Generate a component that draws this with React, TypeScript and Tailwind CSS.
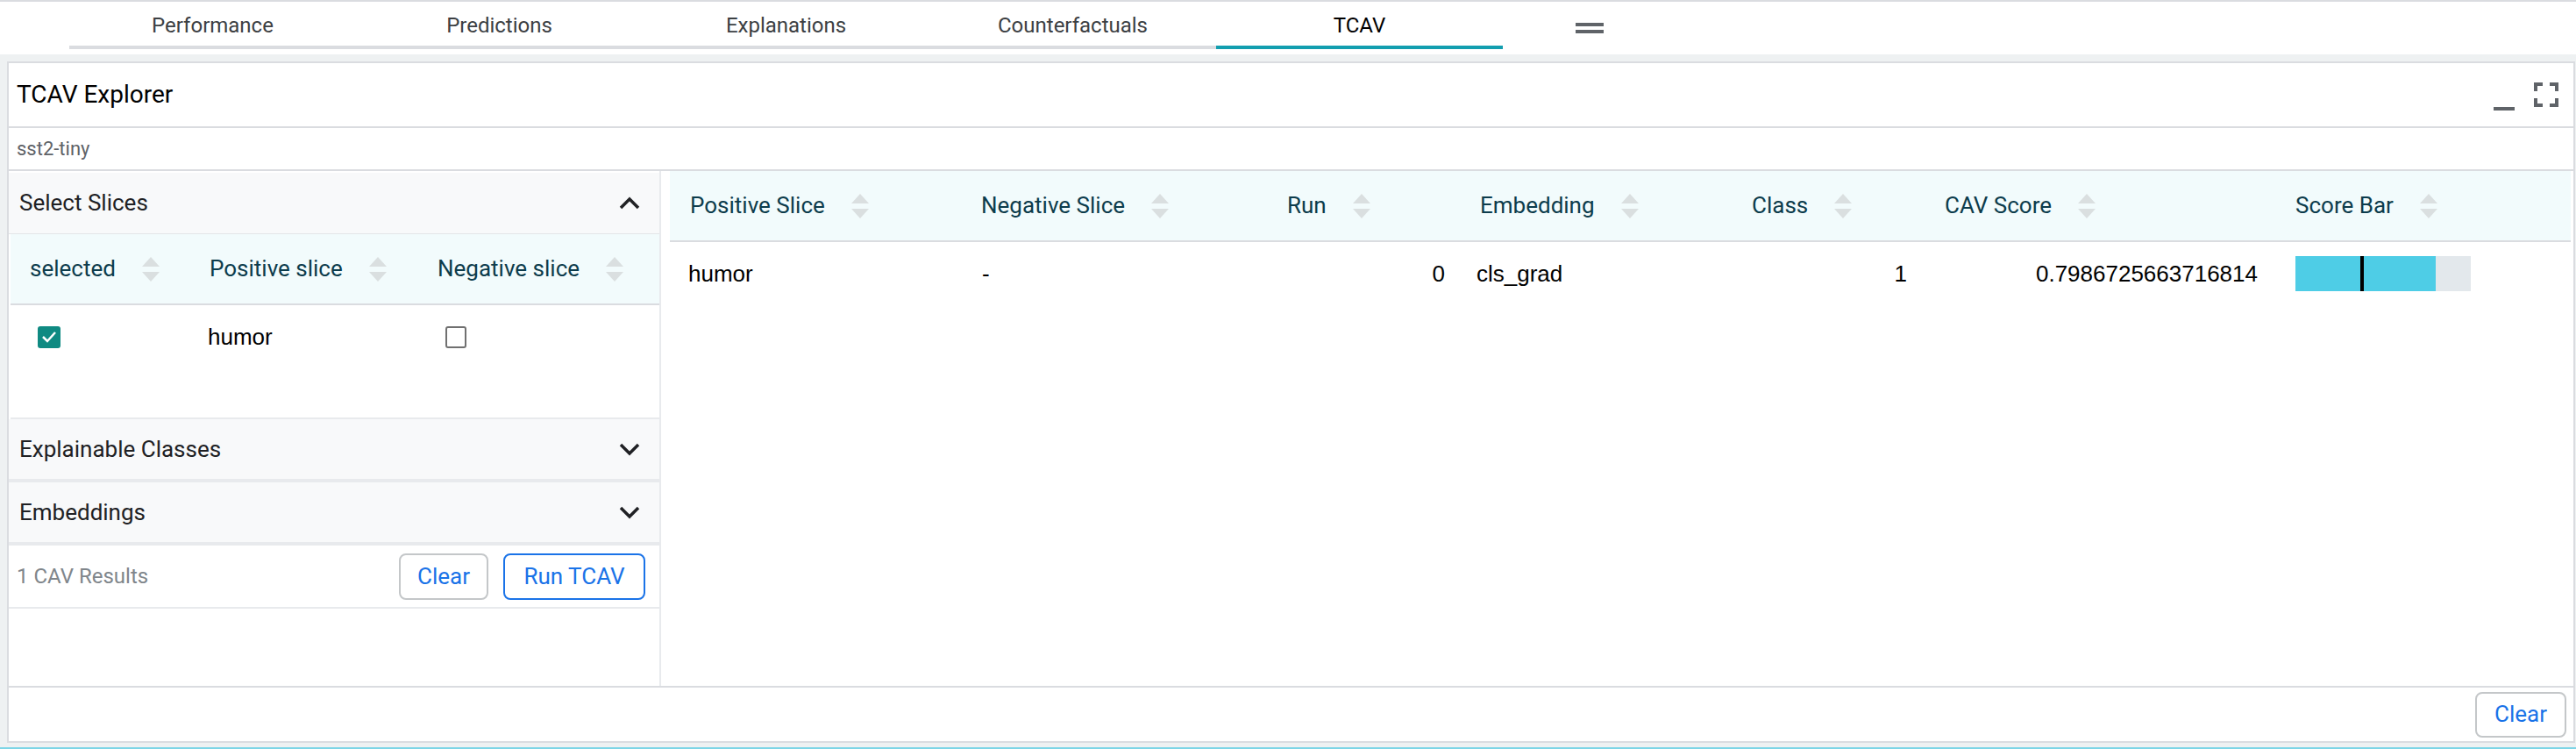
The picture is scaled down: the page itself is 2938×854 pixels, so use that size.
import React from "react";

const TABS = ["Performance", "Predictions", "Explanations", "Counterfactuals", "TCAV"];

function SortArrows() {
  return (
    <svg width="20" height="28" viewBox="0 0 20 28" className="shrink-0">
      <path d="M10 0 L20 11 L0 11 Z" fill="#dadfe0" />
      <path d="M0 17 L20 17 L10 28 Z" fill="#dadfe0" />
    </svg>
  );
}

function Chevron({ up }: { up?: boolean }) {
  return (
    <svg width="24" height="15" viewBox="0 0 24 15">
      <path
        d={up ? "M2 13 L12 3 L22 13" : "M2 2 L12 12 L22 2"}
        stroke="#202124"
        strokeWidth="3.5"
        fill="none"
      />
    </svg>
  );
}

function HeadCell({ label, className }: { label: string; className: string }) {
  return (
    <div className={`flex items-center gap-[30px] pl-[23px] ${className}`}>
      <span>{label}</span>
      <SortArrows />
    </div>
  );
}

function Section({ title, up }: { title: string; up?: boolean }) {
  return (
    <div className="h-full bg-[#f8f9fa] flex items-center justify-between pl-[12px] pr-[22px] text-[26px] text-[#202124]">
      <span>{title}</span>
      <Chevron up={up} />
    </div>
  );
}

export default function App() {
  return (
    <div className="w-[2938px] h-[854px] bg-[#eef1f2] flex flex-col overflow-hidden font-['Roboto',sans-serif]">
      {/* tab bar */}
      <div className="h-[62px] bg-white border-t-2 border-[#dadce0] flex pl-[79px]">
        {TABS.map((t) => (
          <div
            key={t}
            className={`w-[327px] h-[54px] flex items-center justify-center pt-[4px] text-[24px] border-b-4 ${
              t === "TCAV" ? "border-[#129eaf] text-[#000]" : "border-[#dadce0] text-[#3c4043]"
            }`}
          >
            {t}
          </div>
        ))}
        <div className="h-[54px] flex flex-col justify-center gap-[4px] pt-[6px] ml-[83px]">
          <div className="w-[32px] h-[4px] bg-[#5f6368]" />
          <div className="w-[32px] h-[4px] bg-[#5f6368]" />
        </div>
      </div>

      {/* module panel */}
      <div className="mt-[8px] ml-[8px] w-[2929px] h-[777px] border-2 border-[#dadce0] bg-white flex flex-col">
        <div className="h-[74px] border-b-2 border-[#dadce0] flex items-center justify-between pl-[9px] pr-[17px]">
          <span className="text-[28px] text-[#000]">TCAV Explorer</span>
          <div className="flex items-center gap-[22px]">
            <div className="w-[24px] h-[4px] bg-[#5f6368] mt-[32px]" />
            <svg width="28" height="28" viewBox="0 0 28 28">
              <path d="M0 0 H10 V4 H4 V10 H0 Z" fill="#5f6368" />
              <path d="M28 0 H18 V4 H24 V10 H28 Z" fill="#5f6368" />
              <path d="M0 28 H10 V24 H4 V18 H0 Z" fill="#5f6368" />
              <path d="M28 28 H18 V24 H24 V18 H28 Z" fill="#5f6368" />
            </svg>
          </div>
        </div>
        <div className="h-[49px] border-b-2 border-[#dadce0] flex items-center pl-[9px] text-[22px] text-[#5f6368]">
          sst2-tiny
        </div>

        {/* body */}
        <div className="h-[589px] border-b-2 border-[#dadce0] flex">
          {/* left controls */}
          <div className="w-[744px] border-r-2 border-[#e8eaed] flex flex-col pt-[2px]">
            <div className="h-[70px] border-b border-[#e3e6e8]">
              <Section title="Select Slices" up />
            </div>
            <div className="h-[81px] ml-[2px] bg-[#f2fbfc] border-b-2 border-[#dadce0] flex text-[26px] text-[#0d3c4c]">
              <div className="w-[205px] flex items-center gap-[30px] pl-[22px]">
                <span>selected</span>
                <SortArrows />
              </div>
              <div className="w-[260px] flex items-center gap-[30px] pl-[22px]">
                <span>Positive slice</span>
                <SortArrows />
              </div>
              <div className="flex-1 flex items-center gap-[30px] pl-[22px]">
                <span>Negative slice</span>
                <SortArrows />
              </div>
            </div>
            <div className="h-[130px] ml-[2px] border-b-2 border-[#e8eaed]">
              <div className="h-[72px] flex items-center text-[26px] text-[#000] font-['Liberation_Sans',sans-serif]">
                <div className="w-[205px] pl-[31px]">
                  <div className="w-[26px] h-[25px] rounded-[3px] bg-[#0f8a82] flex items-center justify-center">
                    <svg width="18" height="14" viewBox="0 0 18 14">
                      <path d="M2 7 L7 12 L16 2" stroke="#fff" strokeWidth="2.5" fill="none" />
                    </svg>
                  </div>
                </div>
                <div className="w-[260px] pl-[20px]">humor</div>
                <div className="flex-1 pl-[31px]">
                  <div className="w-[24px] h-[25px] rounded-[3px] border-2 border-[#707070] bg-white" />
                </div>
              </div>
            </div>
            <div className="h-[72px] border-b-4 border-[#e8eaed]">
              <Section title="Explainable Classes" />
            </div>
            <div className="h-[72px] border-b-4 border-[#e8eaed]">
              <Section title="Embeddings" />
            </div>
            <div className="h-[72px] border-b-2 border-[#e8eaed] flex items-center justify-between pl-[9px] pr-[16px]">
              <span className="text-[24px] text-[#80868b]">1 CAV Results</span>
              <div className="flex gap-[17px]">
                <button className="w-[102px] h-[53px] rounded-[8px] border-2 border-[#c4c7c9] text-[26px] text-[#1a73e8] bg-white">
                  Clear
                </button>
                <button className="w-[162px] h-[53px] rounded-[8px] border-2 border-[#1a73e8] text-[26px] text-[#1a73e8] bg-white">
                  Run TCAV
                </button>
              </div>
            </div>
          </div>

          {/* results table */}
          <div className="flex-1 pl-[10px] pr-[3px] flex flex-col">
            <div className="h-[81px] bg-[#f2fbfc] border-b-2 border-[#dadce0] flex text-[26px] text-[#0d3c4c]">
              <HeadCell label="Positive Slice" className="w-[332px]" />
              <HeadCell label="Negative Slice" className="w-[349px]" />
              <HeadCell label="Run" className="w-[220px]" />
              <HeadCell label="Embedding" className="w-[310px]" />
              <HeadCell label="Class" className="w-[220px]" />
              <HeadCell label="CAV Score" className="w-[400px]" />
              <HeadCell label="Score Bar" className="flex-1" />
            </div>
            <div className="h-[72px] flex items-center text-[26px] text-[#000] font-['Liberation_Sans',sans-serif]">
              <div className="w-[332px] pl-[21px]">humor</div>
              <div className="w-[349px] pl-[24px]">-</div>
              <div className="w-[220px] pr-[17px] text-right">0</div>
              <div className="w-[310px] pl-[19px]">cls_grad</div>
              <div className="w-[220px] pr-[20px] text-right">1</div>
              <div className="w-[400px] pr-[20px] text-right">0.7986725663716814</div>
              <div className="flex-1 pl-[23px]">
                <div className="w-[200px] h-[40px] bg-[#e3e8ec] flex relative">
                  <div className="h-full bg-[#4ecde6]" style={{ width: `${0.7986725663716814 * 100}%` }} />
                  <div className="absolute left-[74px] top-0 w-[4px] h-full bg-[#000]" />
                </div>
              </div>
            </div>
          </div>
        </div>

        <div className="flex-1 flex items-center justify-end pr-[8px]">
          <button className="w-[104px] h-[52px] rounded-[8px] border-2 border-[#c4c7c9] text-[26px] text-[#1a73e8] bg-white">
            Clear
          </button>
        </div>
      </div>

      <div className="mt-[5px] h-[2px] bg-[#7dd5e6]" />
    </div>
  );
}
